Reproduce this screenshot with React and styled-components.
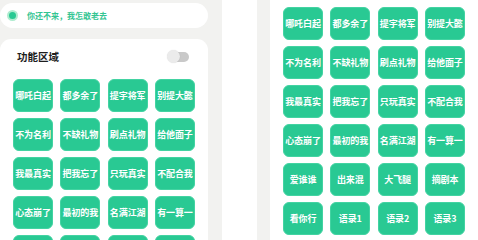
import React from 'react';
import styled, { createGlobalStyle } from 'styled-components';

const phrases = [
    '哪吒白起', '都多余了', '提宇将军', '别提大懿',
    '不为名利', '不缺礼物', '刷点礼物', '给他面子',
    '我最真实', '把我忘了', '只玩真实', '不配合我',
    '心态崩了', '最初的我', '名满江湖', '有一算一',
    '爱谁谁', '出来混', '大飞腿', '摘剧本',
    '看你行', '语录1', '语录2', '语录3',
];

const GlobalStyle = createGlobalStyle`
    html, body {
        margin: 0;
        padding: 0;
        background: #fff;
        overflow: hidden;
    }
    body {
        font-family: 'Noto Sans CJK SC', 'Noto Sans', sans-serif;
    }
`;

const Page = styled.div`
    display: flex;
    gap: 35px;
    width: 478px;
    height: 240px;
    overflow: hidden;
    background: #fff;
`;

const Phone = styled.div`
    flex-shrink: 0;
    background: #f2f2f0;
    box-sizing: border-box;
    height: 240px;
    overflow: hidden;
`;

const LeftPhone = styled(Phone)`
    width: 236px;
    margin-left: -14px;
    padding: 3px 14px 0;
`;

const RightPhone = styled(Phone)`
    flex: 1;
    padding-left: 13px;
`;

const StatusPill = styled.div`
    display: flex;
    align-items: center;
    gap: 9px;
    height: 25px;
    padding-left: 7px;
    margin-bottom: 11px;
    background: #fff;
    border-radius: 12.5px;
`;

const Dot = styled.span`
    width: 7px;
    height: 7px;
    border-radius: 50%;
    background: #29c993;
    border: 2px solid #aeeccf;
`;

const StatusText = styled.span`
    font-size: 8px;
    font-weight: 700;
    color: #33c592;
    line-height: 1;
`;

const Card = styled.div`
    background: #fff;
    border-radius: 11px;
    padding: ${(p) => p.$pad};
    margin-top: ${(p) => p.$top || 0};
    min-height: 260px;
`;

const Header = styled.div`
    display: flex;
    align-items: center;
    justify-content: space-between;
    height: 34px;
    padding: 0 7px 0 4px;
    margin-bottom: 6px;
`;

const Title = styled.span`
    font-size: 10.5px;
    font-weight: 700;
    color: #1e1e1e;
`;

const Toggle = styled.span`
    position: relative;
    width: 21px;
    height: 10px;
    border-radius: 5px;
    background: #c9c9c9;
    margin-top: 1px;

    &::before {
        content: '';
        position: absolute;
        left: -1px;
        top: -2px;
        width: 13px;
        height: 13px;
        border-radius: 50%;
        background: #ebebeb;
        box-shadow: 0 0 1px rgba(0, 0, 0, 0.15);
    }
`;

const Grid = styled.div`
    display: grid;
    grid-template-columns: repeat(4, 40px);
    grid-auto-rows: 33px;
    column-gap: 7.33px;
    row-gap: 6px;
`;

const Chip = styled.div`
    display: flex;
    align-items: center;
    justify-content: center;
    box-sizing: border-box;
    border-radius: 6px;
    background: #29c993;
    border: 1px solid #43d3a2;
    color: #fff;
    font-size: 9px;
    font-weight: 700;
    white-space: nowrap;
    letter-spacing: -0.1px;
`;

const App = () => {
    return (
        <>
            <GlobalStyle />
            <Page>
                <LeftPhone>
                    <StatusPill>
                        <Dot />
                        <StatusText>你还不来，我怎敢老去</StatusText>
                    </StatusPill>
                    <Card $pad="0 12px 0 13px">
                        <Header>
                            <Title>功能区域</Title>
                            <Toggle />
                        </Header>
                        <Grid>
                            {phrases.slice(0, 20).map((text) => (
                                <Chip key={text}>{text}</Chip>
                            ))}
                        </Grid>
                    </Card>
                </LeftPhone>
                <RightPhone>
                    <Card $pad="27px 13px 0" $top="-20px">
                        <Grid>
                            {phrases.map((text) => (
                                <Chip key={text}>{text}</Chip>
                            ))}
                        </Grid>
                    </Card>
                </RightPhone>
            </Page>
        </>
    );
};

export default App;
